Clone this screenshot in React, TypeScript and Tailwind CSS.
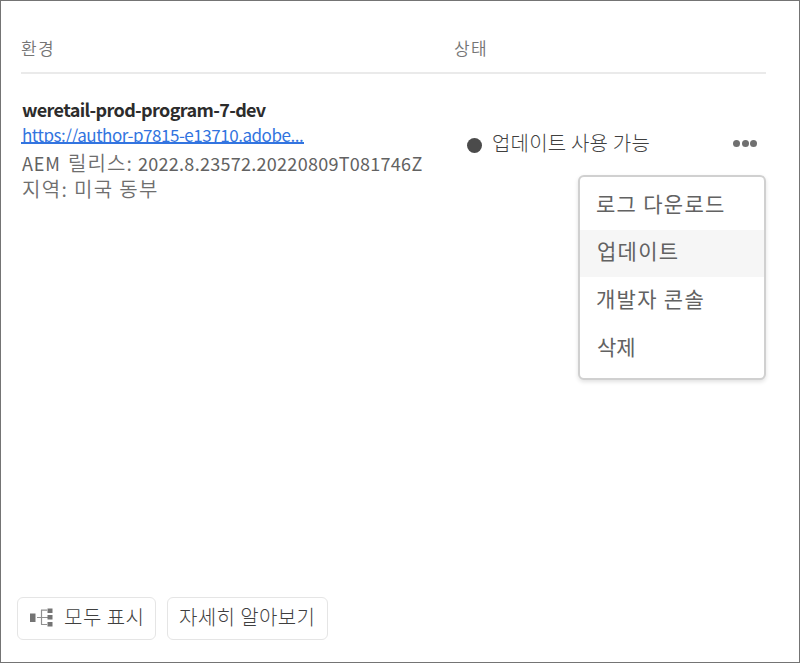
import type { ReactNode } from 'react';

function EnvironmentIcon() {
  return (
    <svg className="mb-[2px] block h-[19px] w-[23px] shrink-0" viewBox="0 0 23 19" fill="none">
      <path d="M11.5 2v14.5M7 9.5h11M11 2.2h6M11 16.5h6" stroke="#909090" strokeWidth="1.2" />
      <path d="M0 5.5h5.5v8.5H0zM17.5 0.5h5v4.5h-5zM17.5 7h5v4.5h-5zM17.5 14h5v4.5h-5z" fill="#747474" />
    </svg>
  );
}

function MenuItem({ children, className }: { children: ReactNode; className: string }) {
  return (
    <li className={`flex items-center font-normal whitespace-nowrap text-[#626262] ${className}`}>
      {children}
    </li>
  );
}

export default function App() {
  return (
    <main className="relative flex h-[663px] w-[800px] flex-col overflow-hidden border border-[#747474] bg-white font-['Noto_Sans_CJK_KR',sans-serif]">
      <header className="mr-[33px] ml-5 flex h-[73px] shrink-0 border-b-2 border-[#eaeaea] pt-[35px] text-[17px] leading-6 font-[350] tracking-[1.3px] text-[#757575]">
        <span className="w-[433px]">환경</span>
        <span>상태</span>
      </header>
      <section className="mr-[33px] ml-5 flex h-[150px] shrink-0">
        <div className="w-[446px] pt-[22px] pl-px">
          <h2 className="h-[27px] text-[18px] leading-[26px] font-bold tracking-[-0.64px] whitespace-nowrap text-[#2c2c2c]">weretail-prod-program-7-dev</h2>
          <a className="-ml-px block h-[21px] w-[283px] overflow-hidden border-b-2 border-[#3274e0] pl-px text-[17px] leading-[23px] tracking-[-0.46px] whitespace-nowrap text-[#3274e0]">https://author-p7815-e13710.adobe...</a>
          <p className="mt-[5px] flex h-[27px] text-[18px] leading-[28px] whitespace-nowrap text-[#6e6e6e]">
            <span className="w-[46px] tracking-[0.9px] text-[#626262]">AEM</span>
            <span className="w-[70px] text-[20px] leading-[27px] font-[350] tracking-[1.1px]">릴리스:</span>
            <span className="tracking-[0.28px] text-[#626262]">2022.8.23572.20220809T081746Z</span>
          </p>
          <p className="h-[26px] text-[20px] leading-[26px] font-[350] tracking-[1.35px] text-[#6e6e6e]">지역: 미국 동부</p>
        </div>
        <div className="mt-[54px] flex h-[30px] flex-1 items-center">
          <span className="mt-[5px] size-[15px] shrink-0 rounded-full bg-[#4b4b4b]" />
          <span className="ml-[10px] text-[20px] leading-[30px] font-light tracking-[0.2px] whitespace-nowrap text-[#3f3f3f]">업데이트 사용 가능</span>
          <span className="mt-px mr-[9px] ml-auto flex gap-[1.5px]">
            <i className="size-[7px] rounded-full bg-[#707070]" />
            <i className="size-[7px] rounded-full bg-[#707070]" />
            <i className="size-[7px] rounded-full bg-[#707070]" />
          </span>
        </div>
      </section>
      <ul className="absolute top-[174px] left-[577px] h-[205px] w-[188px] rounded-md border-2 border-[#d0d0d0] bg-white text-[21px] leading-[30px] shadow-[0_2px_4px_rgba(0,0,0,0.12)]">
        <MenuItem className="h-[53px] pb-px pl-4 tracking-[1.3px]">로그 다운로드</MenuItem>
        <MenuItem className="h-[47px] bg-[#f6f6f6] pb-[7px] pl-[17px] tracking-[1.3px]">업데이트</MenuItem>
        <MenuItem className="h-[48px] pb-[7px] pl-4 tracking-[1.3px]">개발자 콘솔</MenuItem>
        <MenuItem className="h-[48px] pb-[6px] pl-[17px]">삭제</MenuItem>
      </ul>
      <footer className="mt-auto mb-[22px] ml-4 flex gap-[11px] text-[20px] leading-[30px] font-light whitespace-nowrap text-[#3f3f3f]">
        <button className="flex h-[43px] w-[139px] items-center rounded-md border border-[#e5e5e5] pl-3">
          <EnvironmentIcon />
          <span className="mb-[3px] ml-[11px] tracking-[0.5px]">모두 표시</span>
        </button>
        <button className="flex h-[43px] w-[161px] items-center rounded-md border border-[#e5e5e5] pb-[3px] pl-[11px] tracking-[0.4px]">자세히 알아보기</button>
      </footer>
    </main>
  );
}
